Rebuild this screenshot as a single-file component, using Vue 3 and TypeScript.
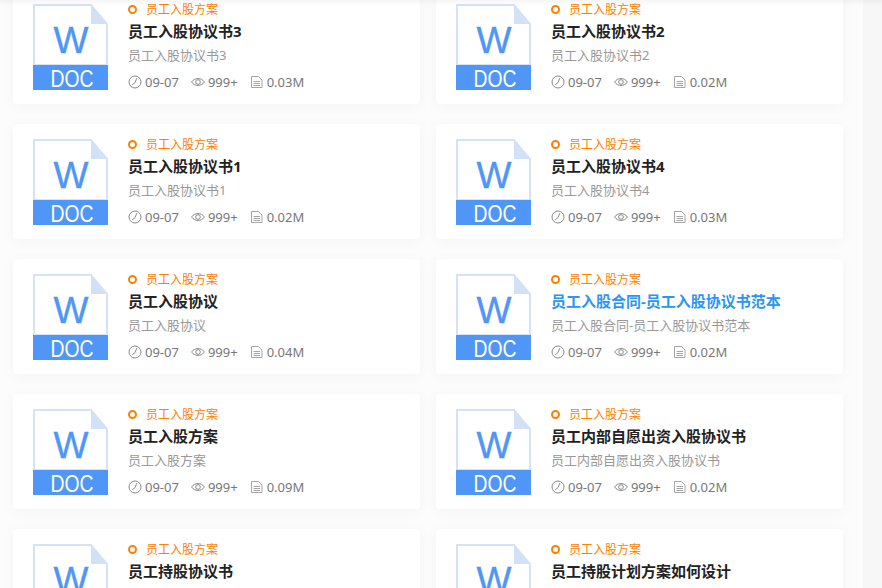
<script setup lang="ts">
interface Doc {
  title: string
  size: string
  active?: boolean
}

const docs: Doc[] = [
  { title: '员工入股协议书3', size: '0.03M' },
  { title: '员工入股协议书2', size: '0.02M' },
  { title: '员工入股协议书1', size: '0.02M' },
  { title: '员工入股协议书4', size: '0.03M' },
  { title: '员工入股协议', size: '0.04M' },
  { title: '员工入股合同-员工入股协议书范本', size: '0.02M', active: true },
  { title: '员工入股方案', size: '0.09M' },
  { title: '员工内部自愿出资入股协议书', size: '0.02M' },
  { title: '员工持股协议书', size: '0.02M' },
  { title: '员工持股计划方案如何设计', size: '0.02M' },
]
</script>

<template>
  <div class="page">
    <div class="top-shadow"></div>
    <div class="list">
      <div v-for="doc in docs" :key="doc.title" class="card">
        <svg class="file" viewBox="0 0 75 86" width="75" height="86">
          <path d="M1 1H58L74 20V61H1Z" fill="#fff" stroke="#d5e3f8" stroke-width="2" />
          <path d="M58 1L75 20H58Z" fill="#d3e1f7" />
          <rect x="0" y="61" width="75" height="25" fill="#4f96f6" />
          <text x="38" y="49" class="file-w">W</text>
          <text x="39" y="83" class="file-ext" textLength="43" lengthAdjust="spacingAndGlyphs">DOC</text>
        </svg>
        <div class="info">
          <div class="tag"><i class="dot"></i>员工入股方案</div>
          <div class="title" :class="{ active: doc.active }">{{ doc.title }}</div>
          <div class="desc">{{ doc.title }}</div>
          <div class="meta">
            <span class="meta-item">
              <svg viewBox="0 0 14 14" width="14" height="14">
                <circle cx="7" cy="7" r="6" fill="none" stroke="#8a8a8a" />
                <path d="M8.8 3.2L7 7.6L4.2 9.8" fill="none" stroke="#8a8a8a" />
              </svg>
              09-07
            </span>
            <span class="meta-item">
              <svg viewBox="0 0 14 14" width="14" height="14">
                <path d="M0.6 7C3.5 2.4 10.5 2.4 13.4 7C10.5 11.6 3.5 11.6 0.6 7Z" fill="none" stroke="#8a8a8a" />
                <circle cx="7" cy="7" r="2.3" fill="none" stroke="#8a8a8a" />
              </svg>
              999+
            </span>
            <span class="meta-item">
              <svg viewBox="0 0 14 14" width="14" height="14">
                <path d="M1.5 1.5H8.5L12 5V12.5H1.5Z" fill="none" stroke="#a5a5a5" />
                <path d="M3.5 6.5H10M3.5 8.5H10M3.5 10.5H10" stroke="#a5a5a5" />
              </svg>
              {{ doc.size }}
            </span>
          </div>
        </div>
      </div>
    </div>
    <div class="side"></div>
  </div>
</template>

<style>
html, body {
  margin: 0;
  height: 100%;
  overflow: hidden;
  background: #fcfcfc;
}
</style>

<style scoped>
.page {
  position: relative;
  display: flex;
  justify-content: space-between;
  width: 882px;
  height: 588px;
  overflow: hidden;
  font-family: "Noto Sans", "Noto Sans CJK SC", sans-serif;
}

.top-shadow {
  position: absolute;
  top: 0;
  left: 0;
  right: 0;
  height: 6px;
  background: linear-gradient(rgba(0, 0, 0, 0.035), rgba(0, 0, 0, 0));
}

.list {
  display: grid;
  grid-template-columns: 407px 407px;
  column-gap: 16px;
  row-gap: 20px;
  align-content: start;
  margin: -11px 0 0 13px;
}

.card {
  display: flex;
  height: 115px;
  box-sizing: border-box;
  padding: 15px 0 0 20px;
  background: #fff;
  border-radius: 4px;
  box-shadow: 0 2px 14px rgba(0, 0, 0, 0.04);
}

.file {
  flex: none;
  overflow: visible;
}

.file-w {
  font: 37px "Liberation Sans", sans-serif;
  fill: #4f96f6;
  stroke: #4f96f6;
  stroke-width: 0.4;
  text-anchor: middle;
}

.file-ext {
  font: 24px "Liberation Sans", sans-serif;
  fill: #fff;
  text-anchor: middle;
}

.info {
  margin-left: 20px;
  margin-top: -5px;
}

.tag {
  display: flex;
  align-items: center;
  height: 20px;
  font-size: 12px;
  color: #ff8000;
}

.dot {
  width: 5px;
  height: 5px;
  margin-right: 9px;
  border: 2px solid #ff8000;
  border-radius: 50%;
}

.title {
  margin-top: 1px;
  font-size: 15px;
  font-weight: 700;
  line-height: 22px;
  color: #222;
}

.title.active {
  color: #2b95f5;
}

.desc {
  margin-top: 2px;
  font-size: 13px;
  line-height: 22px;
  color: #999;
}

.meta {
  display: flex;
  gap: 12px;
  margin-top: 6px;
  font-size: 13px;
  line-height: 20px;
  color: #777;
}

.meta-item {
  display: flex;
  align-items: center;
  gap: 3px;
}

.side {
  width: 19px;
  height: 100%;
  background: #f7f7f8;
}
</style>
